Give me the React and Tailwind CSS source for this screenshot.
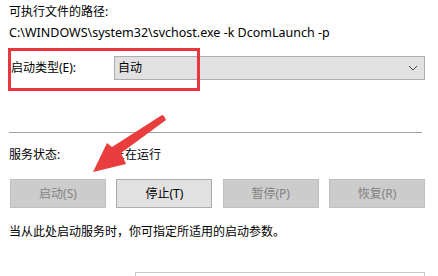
import React from 'react';

const font = { fontFamily: '"Noto Sans", "Noto Sans CJK SC", sans-serif' };

function Btn({ children, disabled }) {
  return (
    <button
      type="button"
      className={
        disabled
          ? 'w-[96px] h-[29px] border border-[#bfbfbf] bg-[#cccccc] text-[#838383] text-[12px]'
          : 'w-[96px] h-[29px] border border-[#adadad] bg-[#e1e1e1] text-[#000000] text-[12px]'
      }
    >
      {children}
    </button>
  );
}

export default function App() {
  return (
    <div className="relative w-[438px] h-[276px] overflow-hidden bg-white text-[12px] text-black" style={font}>
      <div className="pl-[9px] pt-[2px]">
        <p className="leading-[20px]">可执行文件的路径:</p>
        <p className="leading-[20px] mt-px text-[12.5px]">C:\WINDOWS\system32\svchost.exe -k DcomLaunch -p</p>

        <div className="mt-[13px] flex items-center h-[24px]">
          <span className="pl-[2px] w-[105px]">启动类型(E):</span>
          <div className="w-[311px] h-[24px] border border-[#adadad] bg-[#e1e1e1] flex items-center justify-between pl-[3px] pr-[6px]">
            <span>自动</span>
            <svg width="10" height="6" viewBox="0 0 10 6" className="text-[#444]">
              <path d="M1 1 L5 5 L9 1" fill="none" stroke="currentColor" strokeWidth="1" />
            </svg>
          </div>
        </div>

        <div className="mt-[52px] w-[413px] border-t border-[#a0a0a0]" />

        <div className="mt-[12px] flex leading-[20px]">
          <span className="w-[104px]">服务状态:</span>
          <span>正在运行</span>
        </div>

        <div className="mt-[14px] ml-px w-[415px] flex justify-between">
          <Btn disabled>启动(S)</Btn>
          <Btn>停止(T)</Btn>
          <Btn disabled>暂停(P)</Btn>
          <Btn disabled>恢复(R)</Btn>
        </div>

        <p className="mt-[14px] leading-[20px]">当从此处启动服务时，你可指定所适用的启动参数。</p>

        <div className="mt-[30px] ml-[126px] w-[290px] h-[24px] border border-[#c8c8c8]" />
      </div>

      {/* annotation box */}
      <div className="absolute left-[8px] top-[48px] w-[192px] h-[43px] border-[3px] border-[#e8383d]" />

      {/* annotation arrow */}
      <svg className="absolute left-0 top-0" width="438" height="276" viewBox="0 0 438 276">
        <polygon
          points="164,116 166,120 121,153 126,164 93,172 107,143 112,147 162,115"
          fill="#ea3d3d"
        />
      </svg>
    </div>
  );
}
